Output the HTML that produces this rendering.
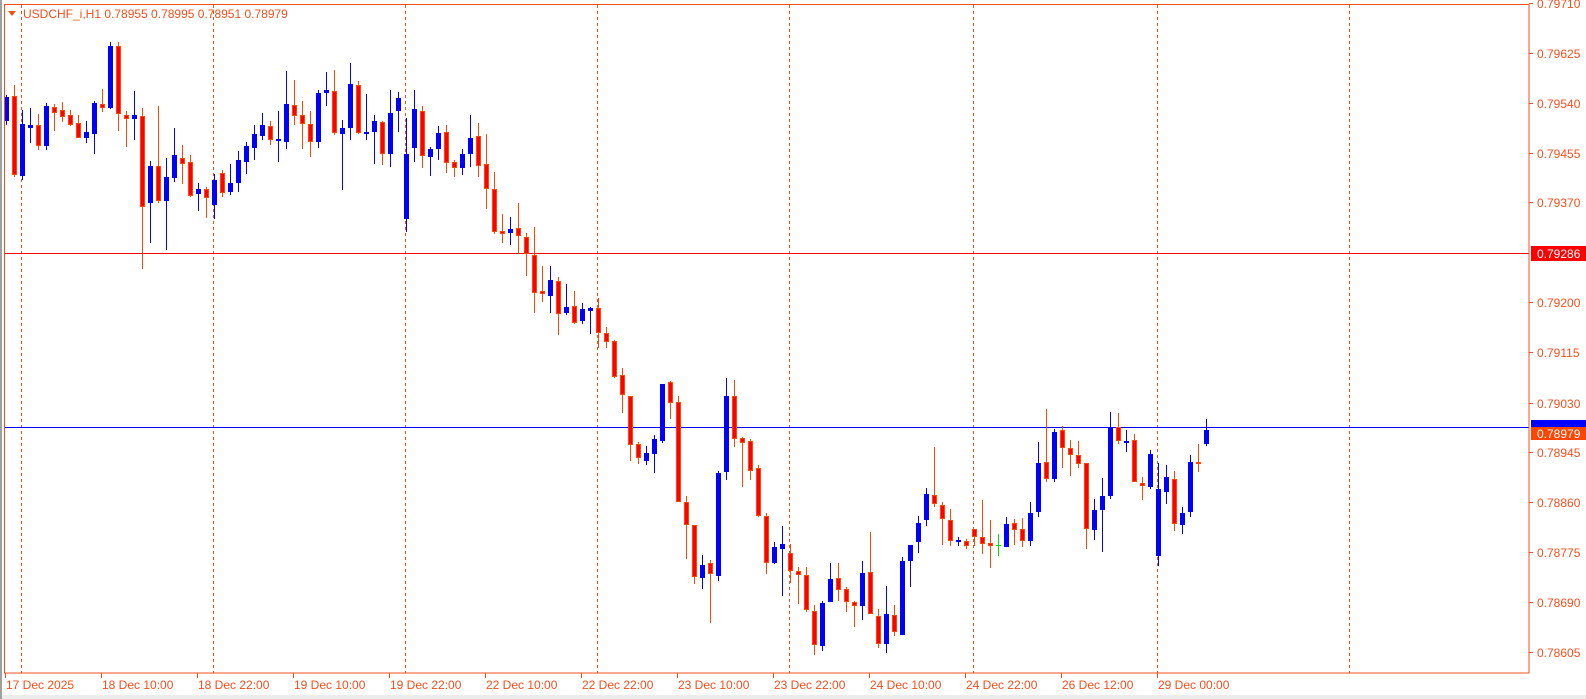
<!DOCTYPE html>
<html><head><meta charset="utf-8">
<style>
html,body{margin:0;padding:0;background:#fff;}
body{width:1586px;height:699px;overflow:hidden;position:relative;font-family:"Liberation Sans",sans-serif;}
svg{position:absolute;left:0;top:0;}
svg text{font-family:"Liberation Sans",sans-serif;font-size:12px;}
</style></head><body>
<svg id="s" width="1586" height="699" xmlns="http://www.w3.org/2000/svg">
<rect x="0" y="0" width="1586" height="699" fill="#fff"/>
<rect x="0" y="695" width="1586" height="4" fill="#ececec"/>
<rect x="0" y="0" width="2" height="699" fill="#a0a0a0"/>
<g id="grid" stroke="#f0501e" stroke-width="1" stroke-dasharray="3,3"></g>
<line x1="4" y1="253.5" x2="1529" y2="253.5" stroke="#ff0000" stroke-width="1"/>
<line x1="4" y1="427.5" x2="1529" y2="427.5" stroke="#0000ff" stroke-width="1"/>
<g id="c"></g>
<rect x="4.5" y="4.5" width="1524.5" height="668.5" fill="none" stroke="#f0501e" stroke-width="1"/>
<g fill="#f0501e">
<polygon points="8,11 16,11 12,16"/>
<text x="23" y="18">USDCHF_i,H1  0.78955 0.78995 0.78951 0.78979</text>
</g>
<g id="yl" fill="#f0501e" stroke="none">
<text x="1537" y="8">0.79710</text>
<text x="1537" y="58">0.79625</text>
<text x="1537" y="108">0.79540</text>
<text x="1537" y="158">0.79455</text>
<text x="1537" y="207">0.79370</text>
<text x="1537" y="307">0.79200</text>
<text x="1537" y="357">0.79115</text>
<text x="1537" y="408">0.79030</text>
<text x="1537" y="457">0.78945</text>
<text x="1537" y="507">0.78860</text>
<text x="1537" y="557">0.78775</text>
<text x="1537" y="607">0.78690</text>
<text x="1537" y="657">0.78605</text>
</g>
<g stroke="#f0501e">
<line x1="1529" y1="3.5" x2="1533" y2="3.5"/><line x1="1529" y1="53.5" x2="1533" y2="53.5"/>
<line x1="1529" y1="103.5" x2="1533" y2="103.5"/><line x1="1529" y1="153.5" x2="1533" y2="153.5"/>
<line x1="1529" y1="202.5" x2="1533" y2="202.5"/><line x1="1529" y1="302.5" x2="1533" y2="302.5"/>
<line x1="1529" y1="352.5" x2="1533" y2="352.5"/><line x1="1529" y1="403.5" x2="1533" y2="403.5"/>
<line x1="1529" y1="452.5" x2="1533" y2="452.5"/><line x1="1529" y1="502.5" x2="1533" y2="502.5"/>
<line x1="1529" y1="552.5" x2="1533" y2="552.5"/><line x1="1529" y1="602.5" x2="1533" y2="602.5"/>
<line x1="1529" y1="652.5" x2="1533" y2="652.5"/>
</g>
<rect x="1531" y="246" width="55" height="15" fill="#ff0000"/>
<text x="1537" y="258" fill="#fff">0.79286</text>
<rect x="1531" y="420" width="55" height="8" fill="#0000ff"/>
<rect x="1531" y="427" width="55" height="13" fill="#ff4500"/>
<text x="1537" y="438" fill="#fff">0.78979</text>
<g fill="#f0501e">
<text x="6" y="689">17 Dec 2025</text>
<text x="102" y="689">18 Dec 10:00</text>
<text x="198" y="689">18 Dec 22:00</text>
<text x="294" y="689">19 Dec 10:00</text>
<text x="390" y="689">19 Dec 22:00</text>
<text x="486" y="689">22 Dec 10:00</text>
<text x="582" y="689">22 Dec 22:00</text>
<text x="678" y="689">23 Dec 10:00</text>
<text x="774" y="689">23 Dec 22:00</text>
<text x="870" y="689">24 Dec 10:00</text>
<text x="966" y="689">24 Dec 22:00</text>
<text x="1062" y="689">26 Dec 12:00</text>
<text x="1158" y="689">29 Dec 00:00</text>
</g>
<g id="ticks" stroke="#f0501e"></g>
</svg>
<script>
var NS="http://www.w3.org/2000/svg";
function el(t,a,p){var e=document.createElementNS(NS,t);for(var k in a)e.setAttribute(k,a[k]);p.appendChild(e);return e;}
var grid=document.getElementById('grid');
[21,213,405,597,789,973,1157,1349].forEach(function(x){el('line',{x1:x+.5,y1:5,x2:x+.5,y2:673},grid);});
var tk=document.getElementById('ticks');
[5,101,197,293,389,485,581,677,773,869,965,1061,1157].forEach(function(x){el('line',{x1:x+.5,y1:673,x2:x+.5,y2:678},tk);});
var A=[[97,121,95,125,'b'],[96,175,85,177,'r'],[124,176,110,180,'b'],[125,128,108,143,'b'],[125,146,114,150,'r'],[106,146,103,150,'b'],[107,113,104,131,'r'],[110,117,102,122,'r'],[115,125,110,126,'r'],[123,138,115,138,'r'],
[132,138,121,143,'b'],[103,134,101,154,'b'],[104,108,89,112,'r'],[46,108,42,109,'b'],[46,114,42,131,'r'],[115,119,111,147,'r'],[115,119,91,140,'b'],[116,207,108,269,'r'],[166,203,161,243,'b'],[166,201,106,203,'r'],
[177,201,158,250,'b'],[155,178,128,182,'b'],[158,164,145,184,'r'],[162,196,155,197,'r'],[189,194,183,211,'b'],[189,198,187,218,'r'],[180,205,174,219,'b'],[173,193,170,197,'r'],[183,192,164,195,'b'],[160,183,151,192,'b'],
[146,162,142,174,'b'],[134,148,125,160,'b'],[125,136,113,140,'b'],[126,140,121,145,'r'],[139,140,111,162,'b'],[104,142,71,149,'b'],[105,116,80,125,'r'],[115,124,101,149,'r'],[124,142,111,157,'r'],[93,142,90,148,'b'],
[90,93,72,106,'b'],[91,133,70,135,'r'],[128,134,120,190,'b'],[84,128,63,140,'b'],[85,133,81,134,'r'],[132,133,94,140,'b'],[121,132,115,164,'b'],[122,154,121,165,'r'],[113,154,90,167,'b'],[98,111,92,132,'b']];
var B=[[151,213,117,225,'b'],[109,146,90,159,'b'],[110,153,106,165,'r'],[147,154,145,172,'b'],[131,147,125,157,'b'],[130,160,124,169,'r'],[159,165,157,173,'r'],[151,165,147,171,'b'],[136,151,114,164,'b'],[134,163,122,173,'r'],
[161,185,132,204,'r'],[185,225,168,227,'r'],[224,227,208,236,'r'],[223,226,211,238,'b'],[222,229,198,246,'r'],[230,246,226,267,'r'],[247,283,221,302,'r'],[281,284,258,292,'r'],[271,286,258,302,'b'],[272,303,268,323,'r'],
[297,302,275,304,'b'],[296,312,281,313,'r'],[299,310,293,313,'b'],[298,300,297,322,'b'],[298,321,288,336,'r'],[321,330,316,336,'r'],[329,363,328,364,'r'],[361,380,355,397,'r'],[381,428,381,443,'r'],[427,440,425,446,'r'],
[435,443,429,447,'b'],[422,436,418,454,'b'],[370,424,370,426,'b'],[368,388,367,403,'r'],[387,482,381,482,'r'],[482,504,476,536,'r'],[504,553,504,560,'r'],[542,554,532,565,'b'],[540,550,537,597,'r'],[454,552,452,557,'b'],
[381,453,364,461,'b'],[381,422,366,430,'r'],[421,426,420,468,'r'],[424,452,422,461,'r'],[450,495,447,496,'r'],[495,540,492,550,'r'],[525,540,520,541,'b']];
B=B.map(function(c){return c.slice(0,4).map(function(v){return 89.5+(v-90)*1.0526;}).concat([c[4]]);});
var C=[[539.7,545.3,522,591.7,'b'],[548.7,567.3,539.7,579,'r'],[566.7,571.3,563,599.7,'r'],[570.7,606.3,563,608,'r'],[606.7,640.7,600.7,651.3,'r'],[598.7,641.7,596.7,647.3,'b'],[574.7,598.3,558.7,598.3,'b'],[574,586.3,558.7,596.7,'r'],[584.7,598.3,583.3,608.3,'r'],[597.7,602.3,596.7,623.3,'r'],
[568.7,602.3,556.7,616.3,'b'],[568,610,527.7,610,'r'],[612,640,604.7,644,'r'],[610,640,581.7,649,'b'],[611,628,600.7,632.3,'r'],[556.7,631.3,552.7,631.3,'b'],[540.7,557.3,540.7,583.3,'b'],[518.7,538.3,511.7,549.3,'b'],[489.7,516.3,483.7,522.3,'b'],[491,500,442.7,503.3,'r'],
[501,515,497.7,541.3,'r'],[515.7,537.3,504.7,542.3,'r'],[535.7,538.3,532.7,542.3,'b'],[537,542.3,534.7,544.7,'r'],[524.7,533,524.7,542.3,'r'],[532.7,540.3,495.7,549.7,'r'],[539,542.3,515.7,564.3,'r'],[541,541,529.7,552.3,'g'],[519.7,543.3,512.7,543.3,'b'],[519,526.3,514.7,540.7,'r'],
[524.7,537.3,513.7,543.3,'r'],[508.7,537.3,497.7,542.3,'b'],[458.7,508.3,437.7,513.3,'b'],[457.7,475.3,404.7,478.3,'r'],[427.7,475.3,424.7,478.3,'b'],[425.7,444.3,421.7,463.7,'r'],[443.7,451.3,435.7,471.7,'r'],[450.7,460.3,436.7,463.7,'r'],[458.7,525.3,458.7,544.7,'r'],[505.7,526.3,494.7,536.3,'b'],
[491.7,506.3,473.7,548.3,'b'],[422.7,492.3,407.7,495.3,'b'],[422.7,437.3,408.7,440.3,'r'],[437,438.3,425.7,448.3,'b'],[435.7,478.3,429.7,478.3,'r'],[478.7,482.3,472.7,496.3,'r'],[449.7,483,445.7,484.7,'b'],[484.7,552.3,458.7,562.3,'b'],[472.7,488.3,460.7,500.3,'b'],[474.7,520.3,466.7,527.3,'r'],
[508.7,521.3,502.7,530.3,'b'],[457.7,508.3,450.7,513.3,'b'],[457.7,458.3,439.7,468.3,'r'],[426,440,415,442,'b']];
C=C.map(function(c){return c.slice(0,4).map(function(v){return v+4;}).concat([c[4]]);});
var all=A.concat(B).concat(C);
var g=document.getElementById('c');
all.forEach(function(c,i){
  var x=6+i*8;
  var col=c[4]=='b'?'#0000ff':(c[4]=='g'?'#00e000':'#ff4500');
  el('line',{x1:x+.5,y1:Math.round(c[2]),x2:x+.5,y2:Math.round(c[3]),stroke:col,'stroke-width':1},g);
  var t=Math.round(c[0]),b=Math.round(c[1]);
  if(c[4]=='g'){el('line',{x1:x-2,y1:t+.5,x2:x+3,y2:t+.5,stroke:col},g);return;}
  if(b-t<2){b=t+2;}
  if(c[4]=='b'){el('rect',{x:x-2,y:t,width:5,height:b-t,fill:'#0000ff'},g);}
  else{el('rect',{x:x-1.5,y:t+.5,width:4,height:b-t-1,fill:'#ff0000',stroke:'#ff4500','stroke-width':1},g);}
});
</script>
</body></html>
